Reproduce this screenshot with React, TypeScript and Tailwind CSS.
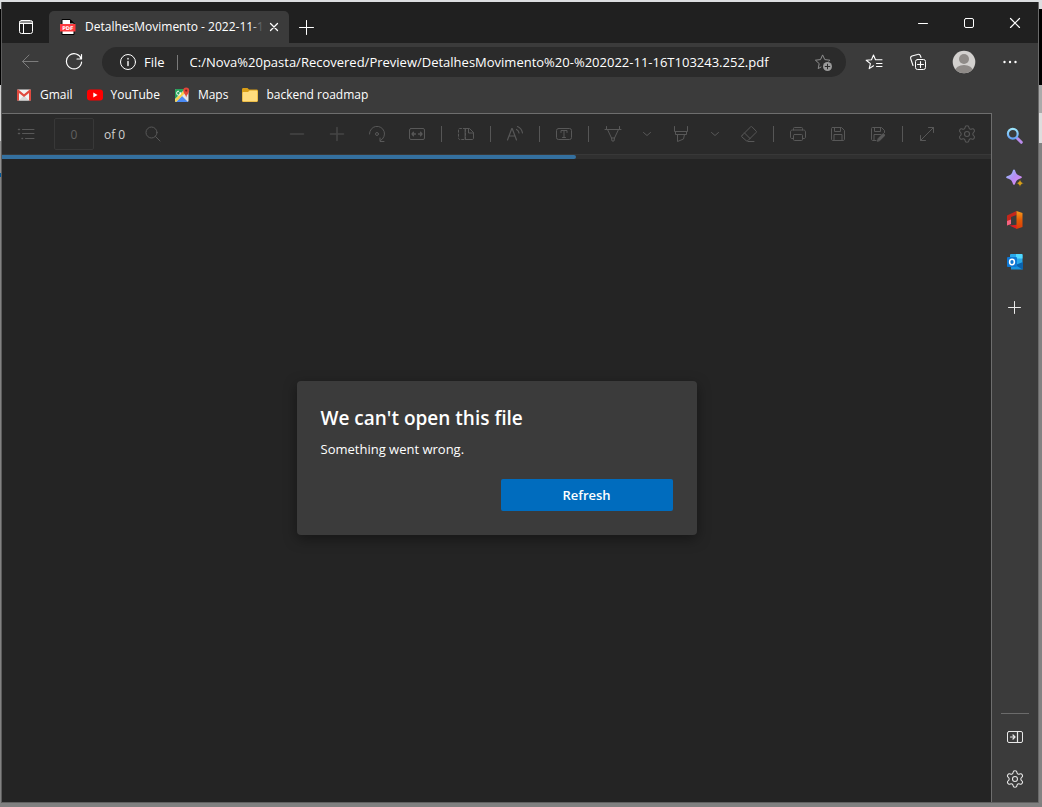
import type { ReactNode } from "react";
import { Settings } from "lucide-react";

type IconProps = { children: ReactNode; size?: number; className?: string };

function Icon({ children, size = 18, className = "" }: IconProps) {
  return (
    <svg
      width={size}
      height={size}
      viewBox={`0 0 ${size} ${size}`}
      fill="none"
      stroke="currentColor"
      strokeWidth="1"
      strokeLinecap="round"
      strokeLinejoin="round"
      aria-hidden="true"
      className={`shrink-0 ${className}`}
    >
      {children}
    </svg>
  );
}

function Gear() {
  return <Settings size={20} strokeWidth={1.3} aria-hidden="true" />;
}

function ToolButton({ label, children, narrow = false }: { label: string; children: ReactNode; narrow?: boolean }) {
  return (
    <button
      type="button"
      aria-label={label}
      className={`flex h-10 shrink-0 items-center justify-center text-[#585858] ${narrow ? "w-7" : "w-10"}`}
    >
      {children}
    </button>
  );
}

function Separator() {
  return (
    <div className="flex w-[9px] shrink-0 justify-center">
      <div className="h-4 w-px bg-[#565656]" />
    </div>
  );
}

function Chevron() {
  return (
    <Icon size={10}>
      <path d="M1.500 3.500 5 6.500l3.500-3" />
    </Icon>
  );
}

function TitleBar() {
  return (
    <header className="flex h-[41px] shrink-0 items-end bg-[#202020] text-white">
      <button type="button" aria-label="Tab actions menu" className="flex h-8 w-[47px] items-center justify-center">
        <Icon size={16}>
          <rect x="1.500" y="1.500" width="13" height="13" rx="2" />
          <path d="M1.500 3h13M1.500 4.500h13M5.500 4.500v10" />
        </Icon>
      </button>
      <div className="flex h-8 w-60 items-center rounded-t-[5px] bg-[#3b3b3b] pr-1 pl-[10px]">
        <svg width="18" height="18" viewBox="0 0 18 18" aria-hidden="true" className="shrink-0">
          <path d="M3 1.500h8l4 4v11H3z" fill="#fff" stroke="#000" />
          <path d="M11 1v4.500h4.500z" fill="#000" />
          <path d="M1 6h15.500v7.500H1z" fill="#ff3b3f" />
          <text x="8.800" y="11.600" fill="#fff" fontSize="5" fontWeight="700" fontFamily="DejaVu Sans, sans-serif" textAnchor="middle">
            PDF
          </text>
        </svg>
        <div className="relative ml-2 flex-1 overflow-hidden text-[12px] leading-4 whitespace-nowrap">
          DetalhesMovimento - 2022-11-16
          <div className="absolute inset-y-0 right-0 w-3 bg-linear-to-r from-transparent to-[#3b3b3b]" />
        </div>
        <button type="button" aria-label="Close tab" className="flex h-6 w-[22px] items-center justify-center">
          <Icon size={10}>
            <path d="m1.500 1.500 7 7m0-7-7 7" strokeWidth="1.300" />
          </Icon>
        </button>
      </div>
      <button type="button" aria-label="New tab" className="flex h-8 w-[35px] items-center justify-center">
        <Icon size={15}>
          <path d="M7.500.5v14M.5 7.500h14" />
        </Icon>
      </button>
      <div className="ml-auto flex self-start">
        <button type="button" aria-label="Minimize" className="flex h-10 w-[46px] items-center justify-center">
          <Icon size={12}>
            <path d="M1.500 7.500h9" />
          </Icon>
        </button>
        <button type="button" aria-label="Maximize" className="flex h-10 w-[46px] items-center justify-center">
          <Icon size={12}>
            <rect x="1.500" y="2.500" width="9" height="9" rx="1.500" />
          </Icon>
        </button>
        <button type="button" aria-label="Close" className="flex h-10 w-[46px] items-center justify-center">
          <Icon size={12}>
            <path d="m1.500 2.500 9 9m0-9-9 9" strokeWidth="1.200" />
          </Icon>
        </button>
      </div>
    </header>
  );
}

function AddressRow() {
  return (
    <div className="flex h-[38px] shrink-0 items-center px-[6px] text-white">
      <button type="button" aria-label="Back" className="flex h-8 w-11 items-center justify-center text-[#7c7c7c]">
        <Icon>
          <path d="M17 8.500H1.500M8 2 1.500 8.500 8 15" />
        </Icon>
      </button>
      <button type="button" aria-label="Refresh page" className="flex h-8 w-11 items-center justify-center">
        <Icon>
          <path d="M16.300 6A7.600 7.600 0 1 0 16.600 9M16.500 1.500V6H12" strokeWidth="1.200" />
        </Icon>
      </button>
      <div className="mx-[6px] flex h-[30px] min-w-0 flex-1 items-center rounded-full bg-[#2b2b2b] pr-[13px] pl-[17px] text-[13px]">
        <Icon size={18}>
          <circle cx="9" cy="9" r="7.500" />
          <path d="M9 8.500v4M9 5.500v.5" strokeWidth="1.400" />
        </Icon>
        <span className="ml-[7px] pt-px">File</span>
        <div className="mx-3 h-[15px] w-px shrink-0 bg-[#7a7a7a]" />
        <input
          aria-label="Address"
          readOnly
          value="C:/Nova%20pasta/Recovered/Preview/DetalhesMovimento%20-%202022-11-16T103243.252.pdf"
          className="min-w-0 flex-1 bg-transparent pt-px outline-none"
        />
        <button type="button" aria-label="Add to favorites" className="text-[#8c8c8c]">
          <Icon size={19}>
            <path d="M7 14 4.200 15.600l1-5L1.400 7.200l5.100-.6 2.100-4.700 2.200 4.700 5.100.6-1 1" />
            <circle cx="13.500" cy="13.500" r="4.500" fill="#9a9a9a" stroke="none" />
            <path d="M13.500 11.200v4.600M11.200 13.500h4.600" stroke="#2b2b2b" />
          </Icon>
        </button>
      </div>
      <button type="button" aria-label="Favorites" className="flex h-8 w-11 items-center justify-center">
        <Icon>
          <path d="M8.500 12.800 4.200 15.600l1.200-5L1.200 7.200l5.300-.5L8.500 2l2 4.700H17M11.500 10.500H17M11.500 13.500H17" strokeWidth="1.100" />
        </Icon>
      </button>
      <button type="button" aria-label="Collections" className="flex h-8 w-11 items-center justify-center">
        <Icon>
          <rect x="6.500" y="6.500" width="10" height="10" rx="2" />
          <path d="M11.500 8.500v6M8.500 11.500h6M4 12.500 1.800 6C1.300 4.300 1.500 3.500 3 3l5.500-1.500c1.500-.5 2.500 0 3 1.500l.5 1.500" strokeWidth="1.100" />
        </Icon>
      </button>
      <button type="button" aria-label="Profile" className="flex h-8 w-12 items-center justify-center">
        <svg width="24" height="24" viewBox="0 0 24 24" aria-hidden="true">
          <clipPath id="avatar">
            <circle cx="12" cy="12" r="11.300" />
          </clipPath>
          <circle cx="12" cy="12" r="11.300" fill="#d2d0ce" />
          <g clipPath="url(#avatar)" fill="#8f8b88">
            <circle cx="12" cy="9" r="5" />
            <ellipse cx="12" cy="21" rx="9" ry="6" />
          </g>
        </svg>
      </button>
      <button type="button" aria-label="Settings and more" className="flex h-8 w-11 items-center justify-center">
        <Icon size={16}>
          <g fill="currentColor" stroke="none">
            <circle cx="2.500" cy="8" r="1.200" />
            <circle cx="8" cy="8" r="1.200" />
            <circle cx="13.500" cy="8" r="1.200" />
          </g>
        </Icon>
      </button>
    </div>
  );
}

function Bookmark({ label, icon }: { label: string; icon: ReactNode }) {
  return (
    <a href="#" className="flex items-center gap-2">
      <svg width="16" height="16" viewBox="0 0 16 16" aria-hidden="true" className="shrink-0">
        {icon}
      </svg>
      <span>{label}</span>
    </a>
  );
}

function BookmarksBar() {
  return (
    <nav aria-label="Favorites bar" className="mb-1 flex h-7 shrink-0 items-center gap-[14px] pl-[14px] text-[12px] leading-4 text-white">
      <Bookmark
        label="Gmail"
        icon={
          <>
            <rect x="1" y="2.500" width="14" height="11" rx="1" fill="#f2f2f2" />
            <path d="m3 13.500 5-5 5 5z" fill="#d8d8d8" />
            <path d="M1 13.500V3.800C1 3 1.500 2.500 2.300 2.500L8 7.300l5.700-4.800c.8 0 1.300.5 1.300 1.300v9.700h-2V6L8 10 3 6v7.500z" fill="#e04a3f" />
          </>
        }
      />
      <Bookmark
        label="YouTube"
        icon={
          <>
            <rect x="0" y="2.500" width="16" height="11" rx="3" fill="#f00" />
            <path d="M6.300 5.600v4.800L10.500 8z" fill="#fff" />
          </>
        }
      />
      <Bookmark
        label="Maps"
        icon={
          <>
            <rect x="1" y="2" width="13.500" height="13" rx="1.500" fill="#e6e6e6" />
            <path d="M1 3.500C1 2.500 1.500 2 2.500 2H11L1 12z" fill="#25a25a" />
            <path d="m2 15 6-6 6 6z" fill="#4a8af4" />
            <path d="m1 12.500 9-9 1.800 1.800L2 15c-.6-.3-1-.8-1-1.500z" fill="#f8d14a" />
            <path d="M6.500 5.500A2 2 0 1 1 5 4.200M5 6h1.800" fill="none" stroke="#fff" />
            <path d="M12.200 10.500C11.800 7.800 9.200 6.200 9.200 3.600a3 3 0 0 1 6 0c0 2.600-2.600 4.200-3 6.900z" fill="#e2463a" />
            <circle cx="12.200" cy="3.600" r="1.100" fill="#7f241e" />
          </>
        }
      />
      <Bookmark
        label="backend roadmap"
        icon={
          <>
            <path d="M0 2.500C0 1.500.5 1 1.500 1h4L7 2.500h7.500c1 0 1.500.5 1.500 1.500v9.500c0 .8-.5 1.500-1.500 1.500h-13C.5 15 0 14.500 0 13.500z" fill="#d99e17" />
            <path d="M.5 6c0-.8.2-1 1-1H6l1.500-1.500h7c.7 0 1 .3 1 1v9c0 .7-.3 1-1 1h-13c-.7 0-1-.3-1-1z" fill="#ffdc7d" />
          </>
        }
      />
    </nav>
  );
}

function PdfToolbar() {
  return (
    <div className="flex h-10 shrink-0 items-center bg-[#2a2a2a] px-1">
      <ToolButton label="Table of contents">
        <Icon>
          <path d="M5.500 4.500H17M5.500 8.500H17M8.500 13.500H17" />
          <path d="M1.500 4.500h1M1.500 8.500h1M5 13.500h.5" strokeWidth="1.500" />
        </Icon>
      </ToolButton>
      <input
        aria-label="Page number"
        defaultValue="0"
        className="ml-2 h-8 w-10 rounded-[2px] border border-[#383838] bg-transparent pt-px text-center text-[12px] text-[#606060] outline-none"
      />
      <span className="ml-[10px] pt-px text-[12px] whitespace-nowrap text-[#d0d0d0]">of 0</span>
      <div className="ml-2">
        <ToolButton label="Find">
          <Icon>
            <circle cx="7.500" cy="7.500" r="5.500" />
            <path d="m11.500 11.500 4.500 4.500" />
          </Icon>
        </ToolButton>
      </div>
      <div className="ml-auto flex items-center">
        <ToolButton label="Zoom out">
          <Icon>
            <path d="M2.500 9h13" strokeWidth="1.600" stroke="#454545" />
          </Icon>
        </ToolButton>
        <ToolButton label="Zoom in">
          <Icon>
            <path d="M2.500 9h13M9 2.500v13" strokeWidth="1.600" stroke="#454545" />
          </Icon>
        </ToolButton>
        <ToolButton label="Rotate">
          <Icon>
            <path d="M1.500 9a7.500 7.500 0 1 1 11 6.500M12 13v3.500h4" />
            <circle cx="9" cy="9" r="1.500" />
          </Icon>
        </ToolButton>
        <ToolButton label="Fit to width">
          <Icon>
            <rect x="1.500" y="3.500" width="15" height="11" rx="1.500" />
            <path d="M4 9h3.500M10.500 9H14M5.500 7.300 4 9l1.500 1.700M12.500 7.300 14 9l-1.500 1.700" strokeWidth="1.300" />
          </Icon>
        </ToolButton>
        <Separator />
        <ToolButton label="Page view">
          <Icon>
            <path d="M8.500 3.500H3C1.800 3.500 1.500 4 1.500 5v8c0 1 .3 1.500 1.500 1.500h5.500z" strokeDasharray="2.200 1.800" />
            <path d="M8.500 3.500h4l4 4v5.500c0 1-.5 1.500-1.500 1.500H8.500zM11.500 3.500V8h5" />
          </Icon>
        </ToolButton>
        <Separator />
        <ToolButton label="Read aloud">
          <Icon>
            <path d="M1.500 15 5.800 3.500h.4L10.500 15M3 11h6M10.500 4.500c1.500.8 2.300 1.800 2.500 3.500M11.500 1.500c3 1.300 4.500 3.500 5 6.500" strokeWidth="1.200" />
          </Icon>
        </ToolButton>
        <Separator />
        <ToolButton label="Add text">
          <Icon>
            <rect x="1.500" y="3.500" width="15" height="11" rx="2" />
            <path d="M6 7.500V5.500h6v2M9 5.500v7M7.500 12.500h3" />
          </Icon>
        </ToolButton>
        <Separator />
        <ToolButton label="Draw">
          <Icon>
            <path d="M2.500 1.500V4.500h13V1.500M3.500 4.500 7.500 13h3l4-8.500M7.500 13l.5 3h2l.5-3M1 4.500h1.500M15.500 4.500H17" />
          </Icon>
        </ToolButton>
        <ToolButton label="Draw options" narrow>
          <Chevron />
        </ToolButton>
        <ToolButton label="Highlight">
          <Icon>
            <path d="M2.500 1.500v5h13v-5M3.500 6.500v3h11v-3M5.500 9.500v7l6-2.500 1-4.500" />
          </Icon>
        </ToolButton>
        <ToolButton label="Highlight options" narrow>
          <Chevron />
        </ToolButton>
        <ToolButton label="Erase">
          <Icon>
            <path d="m2 10.500 8.500-8.500c.6-.6 1-.6 1.600 0l3.900 3.900c.6.6.6 1 0 1.600L8 15.500c-.6.6-1.400.6-2 0L2 12c-.6-.6-.6-1 0-1.500zM4.500 8l5.500 5.500M8 16.500h6" />
          </Icon>
        </ToolButton>
        <Separator />
        <ToolButton label="Print">
          <Icon>
            <path d="M4.500 5V3.500c0-.7.300-1 1-1h7c.7 0 1 .3 1 1V5M4.500 13.500H3c-1 0-1.500-.5-1.500-1.500V7c0-1.200.7-2 2-2h11c1.300 0 2 .8 2 2v5c0 1-.5 1.500-1.500 1.500h-1.500" />
            <rect x="4.500" y="9.500" width="9" height="6" rx="1" />
          </Icon>
        </ToolButton>
        <ToolButton label="Save">
          <Icon>
            <path d="M3.500 2.500h9l3 3v8.500c0 1-.5 1.500-1.500 1.500H4c-1 0-1.500-.5-1.500-1.500V3.500c0-.7.300-1 1-1zM5.500 2.500v4h6v-4M5 15.500v-6h8v6" />
          </Icon>
        </ToolButton>
        <ToolButton label="Save as">
          <Icon>
            <path d="M7 15.500H4c-1 0-1.500-.5-1.500-1.500V3.500c0-.7.300-1 1-1h9l3 3v2M5.500 2.500v4h6v-4M5 15.500v-6h7" />
            <path d="m8.500 16 .7-2.500 5-5 1.800 1.800-5 5z" fill="currentColor" />
          </Icon>
        </ToolButton>
        <Separator />
        <ToolButton label="Full screen">
          <Icon>
            <path d="m2.500 15.500 13-13M10.500 2.500h5v5M2.500 10.500v5h5" />
          </Icon>
        </ToolButton>
        <ToolButton label="PDF settings">
          <Gear />
        </ToolButton>
      </div>
    </div>
  );
}

function Dialog() {
  return (
    <div className="absolute inset-0 flex items-center justify-center">
      <section
        role="alertdialog"
        aria-labelledby="error-title"
        className="flex w-[400px] max-w-full flex-col rounded-[4px] bg-[#3b3b3b] p-6 text-white shadow-[0_4px_14px_rgba(0,0,0,0.4)]"
      >
        <h1 id="error-title" className="text-[19px] leading-[26px] font-semibold">
          We can't open this file
        </h1>
        <p className="mt-[6px] text-[13px] leading-6">Something went wrong.</p>
        <button type="button" className="mt-[18px] h-8 w-[172px] self-end rounded-[2px] bg-[#006cbe] pt-px text-[13px] font-semibold">
          Refresh
        </button>
      </section>
    </div>
  );
}

function SideButton({ label, children }: { label: string; children: ReactNode }) {
  return (
    <button type="button" aria-label={label} className="flex h-[42px] w-full shrink-0 items-center justify-center text-[#e8e8e8]">
      {children}
    </button>
  );
}

function Sidebar() {
  return (
    <aside className="flex w-[46px] shrink-0 flex-col items-center py-[2px]">
      <SideButton label="Search">
        <svg width="18" height="18" viewBox="0 0 18 18" fill="none" aria-hidden="true">
          <defs>
            <linearGradient id="lens" x1="0" y1="0" x2="0" y2="1">
              <stop stopColor="#9be4fb" />
              <stop offset="1" stopColor="#62a0f5" />
            </linearGradient>
          </defs>
          <path d="m11.500 11.500 3.800 3.800" stroke="#b98bea" strokeWidth="3" strokeLinecap="round" />
          <circle cx="6.800" cy="6.800" r="4.900" stroke="url(#lens)" strokeWidth="2.200" />
        </svg>
      </SideButton>
      <SideButton label="Discover">
        <svg width="18" height="18" viewBox="0 0 18 18" aria-hidden="true">
          <defs>
            <linearGradient id="spark" x1="0" y1="0" x2="1" y2="1">
              <stop stopColor="#8ed0ff" />
              <stop offset=".5" stopColor="#b78cf5" />
              <stop offset="1" stopColor="#e38cf0" />
            </linearGradient>
          </defs>
          <path d="M8 .5c.5 0 .8.3 1 .8 1.300 4 1.700 4.400 6 5.900 1.200.5 1.200 1.500 0 2-4.300 1.500-4.700 1.900-6 5.900-.3 1.100-1.700 1.100-2 0-1.300-4-1.700-4.400-6-5.900-1.200-.5-1.200-1.500 0-2 4.300-1.500 4.700-1.900 6-5.900.2-.5.500-.8 1-.8z" fill="url(#spark)" />
          <path d="M14 10.200c.8 2.600 1.300 3.200 4 4-2.700.8-3.200 1.300-4 3.800-.8-2.500-1.300-3-4-3.800 2.700-.8 3.200-1.400 4-4z" fill="#d8a018" stroke="#3b3b3b" strokeWidth=".5" />
        </svg>
      </SideButton>
      <SideButton label="Office">
        <svg width="18" height="20" viewBox="0 0 18 20" aria-hidden="true">
          <defs>
            <linearGradient id="office" x1="0" y1="0" x2="0" y2="1">
              <stop stopColor="#f99b1b" />
              <stop offset=".5" stopColor="#e35b05" />
              <stop offset="1" stopColor="#dd3b08" />
            </linearGradient>
          </defs>
          <path d="M1 5.500 10.500 1v4L5 7v7l-4 1.500z" fill="#c4271b" />
          <path d="M1 11v4.500L5 14v-4.500z" fill="#f56482" />
          <path d="m3.500 15.500 7.500-.8V19z" fill="#e11d24" />
          <path d="m10.500 1 6 2v14l-6 2z" fill="url(#office)" />
        </svg>
      </SideButton>
      <SideButton label="Outlook">
        <svg width="18" height="18" viewBox="0 0 18 18" aria-hidden="true">
          <rect x="4" y="1" width="12.500" height="11" rx="1" fill="#28a8ea" />
          <path d="M10 1h5.500c.6 0 1 .4 1 1v3.500H10z" fill="#50d9ff" />
          <path d="M4 5h6v5H4z" fill="#0a66b8" />
          <path d="M5 16.500V9l5.500 3.500L17 9v6.500c0 .6-.4 1-1 1z" fill="#1793df" />
          <path d="M17 9v6.500c0 .5-.2.800-.5 1L9 12z" fill="#0b62ac" />
          <rect x="1" y="4" width="10" height="10" rx="1" fill="#0f78d4" />
          <ellipse cx="6" cy="9" rx="2.400" ry="2.700" fill="none" stroke="#fff" strokeWidth="1.500" />
        </svg>
      </SideButton>
      <div className="mt-1 w-full">
        <SideButton label="Customize sidebar">
          <Icon size={14}>
            <path d="M6.500.5v12M.5 6.500h12" />
          </Icon>
        </SideButton>
      </div>
      <div className="mt-auto mb-[2px] h-px w-7 bg-[#6b6b6b]" />
      <SideButton label="Hide sidebar">
        <Icon>
          <rect x="1.500" y="3.500" width="15" height="11" rx="1.500" />
          <path d="M11.500 3.500v11M4.500 9h4M7 7l2 2-2 2" strokeWidth="1.200" />
        </Icon>
      </SideButton>
      <SideButton label="Sidebar settings">
        <Gear />
      </SideButton>
    </aside>
  );
}

export default function App() {
  return (
    <div className="flex min-h-screen flex-col bg-[#828282] font-['Open_Sans','Noto_Sans',sans-serif]">
      <div className="h-[2px] shrink-0 bg-[#dcdee0]" />
      <div className="flex flex-1">
        <div className="flex w-[2px] shrink-0 flex-col border-r border-[#5c5c5c]">
          <div className="h-[7px] bg-[#dcdee0]" />
          <div className="h-[76px] bg-black" />
          <div className="h-14 bg-[#d0d0d0]" />
          <div className="h-8 bg-[#909090]" />
          <div className="h-1 bg-[#005a9e]" />
        </div>
        <div className="flex min-w-0 flex-1 flex-col border-b border-[#606060] bg-[#3b3b3b]">
          <TitleBar />
          <AddressRow />
          <BookmarksBar />
          <div className="flex flex-1">
            <main className="relative flex min-w-0 flex-1 flex-col border-t border-r border-[#6e6e6e] bg-[#242424]">
              <PdfToolbar />
              <div className="h-[5px] shrink-0 border-t border-[#383838] bg-[#303030]">
                <div className="h-1 w-[58%] rounded-r-[2px] bg-[#34709f]" />
              </div>
              <Dialog />
            </main>
            <Sidebar />
          </div>
        </div>
        <div className="flex w-1 shrink-0 flex-col border-l border-[#6a6a6a]">
          <div className="h-[7px] bg-[#dcdee0]" />
          <div className="h-[76px] bg-black" />
          <div className="h-7 bg-[#aaaaaa]" />
          <div className="h-[30px] bg-[#dddddd]" />
        </div>
      </div>
      <div className="h-1 shrink-0 bg-[#808080]" />
    </div>
  );
}
